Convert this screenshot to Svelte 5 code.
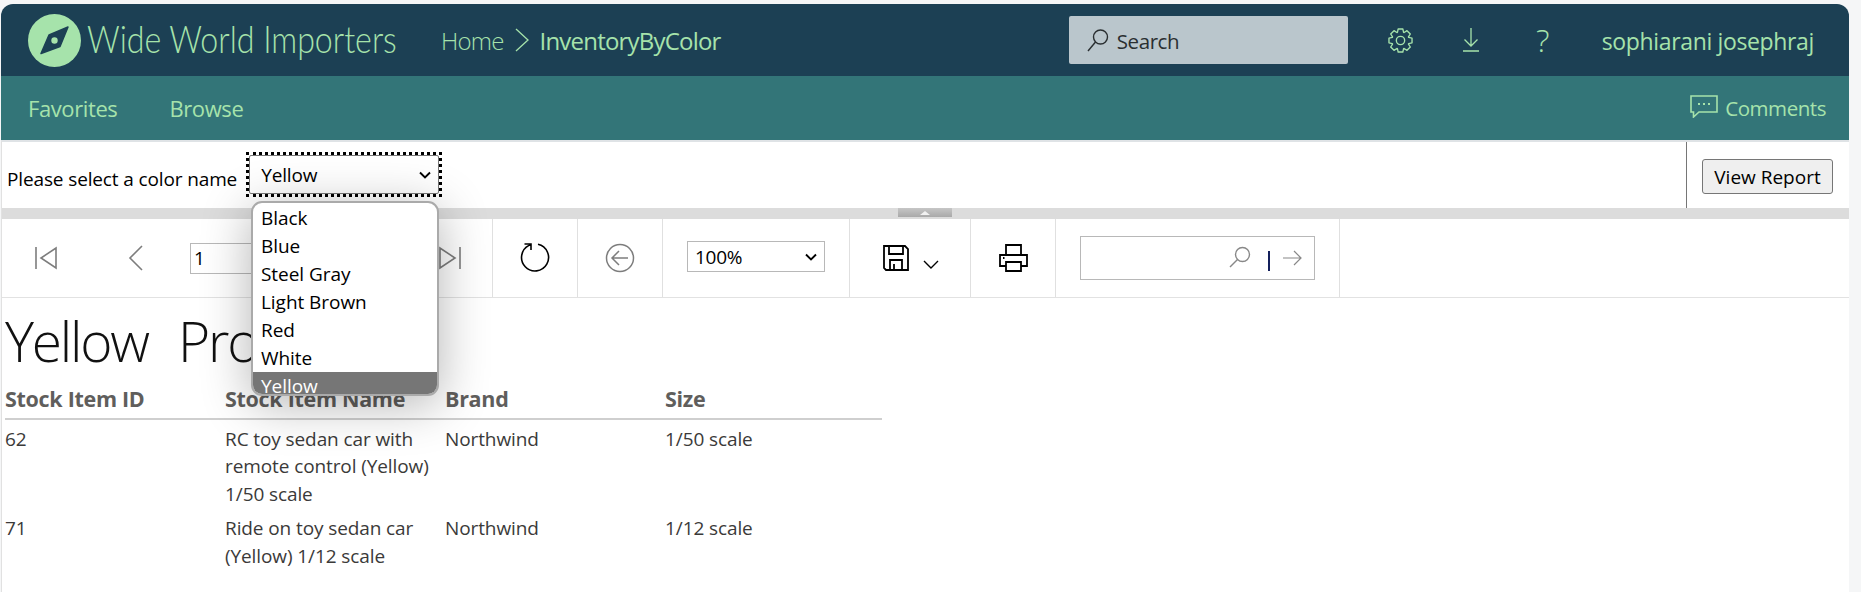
<script>
  const colors = ['Black', 'Blue', 'Steel Gray', 'Light Brown', 'Red', 'White', 'Yellow'];
  const rows = [
    { id: '62', name: 'RC toy sedan car with remote control (Yellow) 1/50 scale', brand: 'Northwind', size: '1/50 scale' },
    { id: '71', name: 'Ride on toy sedan car (Yellow) 1/12 scale', brand: 'Northwind', size: '1/12 scale' }
  ];
  // Eight-toothed gear outline, matching the cog in the header.
  function gearPath() {
    const pts = [];
    for (let i = 0; i < 8; i++) {
      const a = (i * Math.PI) / 4;
      const at = (r, d) => [12 + r * Math.sin(a + d), 12 - r * Math.cos(a + d)];
      pts.push(at(8.4, -0.36), at(11.3, -0.2), at(11.3, 0.2), at(8.4, 0.36));
    }
    return 'M' + pts.map((p) => p[0].toFixed(2) + ' ' + p[1].toFixed(2)).join(' L') + ' Z';
  }
  const gear = gearPath();
</script>

<div class="page">
  <div class="shell">
    <header class="top">
      <svg class="logo" viewBox="0 0 53 53">
        <circle cx="26.5" cy="26.5" r="26.5" fill="#a6e3ab" />
        <path d="M40 13 L32 32.5 L13 39.5 L21 21 Z" fill="#1c4054" stroke="#1c4054" stroke-width="1.5" stroke-linejoin="round" />
        <circle cx="26.5" cy="26.5" r="3.2" fill="#a6e3ab" />
      </svg>
      <span class="brand"><span>Wide World Importers</span></span>
      <span class="crumb light">Home</span>
      <svg class="crumb-sep" viewBox="0 0 16 24"><path d="M2 1 L14 12 L2 23" /></svg>
      <span class="crumb">InventoryByColor</span>
      <div class="search">
        <svg class="ic-search" viewBox="0 0 22 24"><circle cx="13.5" cy="9" r="7" /><path d="M8.5 14 L1 23" /></svg>
        <span>Search</span>
      </div>
      <svg class="ic gear" viewBox="0 0 24 24">
        <circle cx="12" cy="12" r="4" />
        <path d={gear} />
      </svg>
      <svg class="ic down" viewBox="0 0 16 24"><path d="M8 0 V18 M1.5 11.5 L8 18 L14.5 11.5 M0 23 H16" /></svg>
      <span class="help">?</span>
      <span class="user">sophiarani josephraj</span>
    </header>

    <nav class="sub">
      <span class="tab">Favorites</span>
      <span class="tab">Browse</span>
      <span class="comments">
        <svg viewBox="0 0 28 23">
          <path d="M1 1 H27 V17 H9 L3.5 22 V17 H1 Z" />
          <path class="dots" d="M8 9 h2 M13 9 h2 M18 9 h2" />
        </svg>
        Comments
      </span>
    </nav>

    <main class="body">
      <section class="params">
        <span class="label">Please select a color name</span>
        <div class="select-focus">
          <div class="select">Yellow
            <svg class="chev" viewBox="0 0 12 8"><path d="M1 1.5 L6 6.5 L11 1.5" /></svg>
          </div>
        </div>
        <div class="view-cell"><button class="view">View Report</button></div>
      </section>

      <div class="splitter"><span class="handle"><i></i></span></div>

      <section class="toolbar">
        <div class="cell nav">
          <svg class="tool first" viewBox="0 0 22 24"><path d="M1 1 V23 M21 2 V22 L6 12 Z" /></svg>
          <svg class="tool prev" viewBox="0 0 15 26"><path d="M14 1 L2 13 L14 25" /></svg>
          <input class="page-num" value="1" />
          <svg class="tool last" viewBox="0 0 22 24"><path d="M21 1 V23 M1 2 V22 L16 12 Z" /></svg>
        </div>
        <div class="cell refresh">
          <svg viewBox="0 0 30 30"><path d="M18 1.3 A13.5 13.5 0 1 1 9 2.4 L11 1 M4.5 1 H11 V7" /></svg>
        </div>
        <div class="cell back">
          <svg viewBox="0 0 30 30"><circle cx="15" cy="15" r="13.5" /><path d="M7 15 H23 M14 8 L7 15 L14 22" /></svg>
        </div>
        <div class="cell zoom">
          <div class="zoom-select">100%
            <svg class="chev" viewBox="0 0 12 8"><path d="M1 1.5 L6 6.5 L11 1.5" /></svg>
          </div>
        </div>
        <div class="cell save">
          <svg class="floppy" viewBox="0 0 26 26"><path d="M1 1 H22 L25 4 V25 H3 L1 23 Z M6 1 V9 H20 V1 M7 25 V15 H19 V25 M11 19 V25" /></svg>
          <svg class="save-chev" viewBox="0 0 16 9"><path d="M1 1 L8 8 L15 1" /></svg>
        </div>
        <div class="cell print">
          <svg viewBox="0 0 29 28"><path d="M7 11 V1 H22 V11 M7 22 H1 V11 H28 V22 H22 M7 18 H22 V27 H7 Z" /><path class="pdot" d="M4 14 h1.5" /></svg>
        </div>
        <div class="cell find">
          <div class="find-box">
            <svg class="find-ic" viewBox="0 0 22 22"><circle cx="13.5" cy="8.5" r="7" /><path d="M8.5 13.5 L1 21" /></svg>
            <span class="find-bar"></span>
            <svg class="find-next" viewBox="0 0 19 16"><path d="M0 8 H18 M11 1 L18 8 L11 15" /></svg>
          </div>
        </div>
      </section>

      <section class="report">
        <h1>Yellow&nbsp;&nbsp;Products</h1>
        <div class="grid head">
          <span>Stock Item ID</span><span>Stock Item Name</span><span>Brand</span><span>Size</span>
        </div>
        {#each rows as r}
          <div class="grid row">
            <span>{r.id}</span><span>{r.name}</span><span>{r.brand}</span><span>{r.size}</span>
          </div>
        {/each}
      </section>
    </main>

    <ul class="dropdown">
      {#each colors as c}
        <li class:sel={c === 'Yellow'}>{c}</li>
      {/each}
    </ul>
  </div>
</div>

<style>
  :global(body) { margin: 0; background: #f5f6f7; }
  .page { height: 592px; overflow: hidden; padding: 4px 12px 0 1px; box-sizing: border-box; font-family: "Open Sans", "Noto Sans", sans-serif; }
  .shell { position: relative; height: 588px; }

  .top { height: 72px; background: #1c4054; color: #a6e3ab; display: flex; align-items: center; border-radius: 12px 12px 0 0; padding-right: 35px; }
  .logo { width: 53px; height: 53px; margin-left: 27px; margin-top: 1px; flex: none; }
  .brand { font-family: Lato, sans-serif; font-size: 37.5px; font-weight: 300; margin-left: 6px; margin-top: -4px; width: 308px; white-space: nowrap; flex: none; }
  .brand span { display: inline-block; transform: scaleX(.857); transform-origin: left; }
  .crumb { font-size: 24px; letter-spacing: -.8px; white-space: nowrap; }
  .crumb.light { font-weight: 300; margin-left: 46px; }
  .crumb-sep { width: 16px; height: 24px; margin: 0 10px; fill: none; stroke: #a6e3ab; stroke-width: 1.3; flex: none; }
  .search { margin-left: auto; width: 279px; height: 48px; background: #bac6cc; border-radius: 2px; display: flex; align-items: center; color: #2a2f31; font-size: 20.5px; letter-spacing: -.4px; flex: none; }
  .search span { margin-top: 1px; }
  .ic-search { width: 22px; height: 24px; margin: 0 8px 0 18px; fill: none; stroke: #2a2f31; stroke-width: 1.4; }
  .ic { fill: none; stroke: #a6e3ab; stroke-width: 1.3; flex: none; }
  .gear { width: 25px; height: 25px; margin-left: 40px; stroke-linejoin: round; }
  .down { width: 16px; height: 24px; margin-left: 50px; }
  .help { font-size: 32px; font-weight: 300; margin-left: 56px; width: 16px; line-height: 1; text-align: center; }
  .user { font-size: 23px; margin-left: 51px; margin-top: 1px; letter-spacing: -.35px; white-space: nowrap; }

  .sub { height: 64px; background: #337578; color: #a6e3ab; display: flex; align-items: center; font-size: 22px; letter-spacing: -.4px; }
  .tab:first-child { margin-left: 27px; }
  .tab + .tab { margin-left: 52px; }
  .comments { margin-left: auto; margin-right: 23px; display: flex; align-items: center; gap: 7px; font-size: 20.5px; letter-spacing: -.45px; }
  .comments svg { width: 28px; height: 23px; fill: none; stroke: #a6e3ab; stroke-width: 1.6; margin-top: -3px; }
  .comments .dots { stroke-width: 2; }

  .body { background: #fff; border-top: 2px solid #dfe3e6; height: 452px; color: #222; border-left: 1px solid #e1e1e1; box-sizing: border-box; }

  .params { height: 66px; display: flex; align-items: center; color: #000; font-size: 19px; letter-spacing: -.13px; }
  .label { margin-left: 5px; margin-top: 7px; }
  .select-focus { margin-left: 10px; padding: 2px; outline: 3px dotted #000; outline-offset: -2px; flex: none; margin-top: -1px; }
  .select { width: 190px; height: 39px; border: 1px solid #767676; display: flex; align-items: center; justify-content: space-between; padding: 0 7px 0 11px; box-sizing: border-box; background: #fff; border-radius: 2px; }
  .chev { width: 12px; height: 8px; fill: none; stroke: #000; stroke-width: 1.9; }
  .view-cell { margin-left: auto; align-self: stretch; width: 163px; border-left: 1px solid #767676; display: flex; align-items: center; box-sizing: border-box; padding-left: 15px; }
  .view { width: 131px; height: 35px; padding: 0; border: 1px solid #767676; border-radius: 3px; background: #efefef; font: inherit; color: #000; letter-spacing: 0; margin-top: 3px; }

  .splitter { height: 11px; background: #dcdcdc; display: flex; justify-content: center; padding-right: 2px; }
  .handle { width: 54px; height: 9px; background: linear-gradient(#c6c6c6, #a9a9a9); display: flex; justify-content: center; align-items: center; }
  .handle i { width: 0; height: 0; border-left: 5px solid transparent; border-right: 5px solid transparent; border-bottom: 4px solid #f2f2f2; }

  .toolbar { height: 79px; display: flex; border-bottom: 1px solid #e2e2e2; box-sizing: border-box; }
  .cell { border-right: 1px solid #e0e0e0; display: flex; align-items: center; box-sizing: border-box; flex: none; }
  .cell svg { fill: none; }
  .tool { stroke: #7d7d7d; stroke-width: 1.6; }
  .nav { width: 491px; }
  .first { width: 22px; height: 24px; margin-left: 33px; }
  .prev { width: 15px; height: 26px; margin-left: 71px; }
  .page-num { width: 130px; height: 31px; margin-left: 47px; border: 1px solid #b8b8b8; padding: 0 0 0 3px; box-sizing: border-box; font: inherit; font-size: 19px; color: #000; flex: none; outline: none; }
  .last { width: 22px; height: 24px; margin-left: 119px; flex: none; }
  .refresh { width: 85px; justify-content: center; }
  .refresh svg { width: 30px; height: 30px; stroke: #000; stroke-width: 1.6; }
  .back { width: 85px; justify-content: center; }
  .back svg { width: 30px; height: 30px; stroke: #7d7d7d; stroke-width: 1.5; }
  .zoom { width: 187px; padding-left: 24px; }
  .zoom-select { width: 138px; height: 31px; margin-top: -3px; border: 1px solid #b8b8b8; box-sizing: border-box; display: flex; align-items: center; justify-content: space-between; padding: 0 7px; font-size: 19px; color: #000; letter-spacing: -.3px; }
  .save { width: 121px; padding-left: 33px; }
  .floppy { width: 26px; height: 26px; stroke: #000; stroke-width: 1.8; }
  .save-chev { width: 16px; height: 9px; stroke: #000; stroke-width: 1.4; margin: 12px 0 0 14px; }
  .print { width: 85px; justify-content: center; }
  .print svg { width: 29px; height: 28px; stroke: #000; stroke-width: 1.8; }
  .find { width: 284px; padding-left: 24px; }
  .find-box { width: 235px; height: 44px; border: 1px solid #b8b8b8; box-sizing: border-box; display: flex; align-items: center; justify-content: flex-end; padding-right: 12px; }
  .find-ic { width: 22px; height: 22px; stroke: #888; stroke-width: 1.4; margin-top: -2px; }
  .find-bar { width: 2px; height: 20px; background: #14205c; margin: 5px 13px 0 17px; }
  .find-next { width: 19px; height: 16px; stroke: #888; stroke-width: 1.2; margin-top: -1px; }

  .report { padding-left: 3px; }
  h1 { margin: 0; font-weight: 300; font-size: 55px; line-height: 86px; height: 87px; color: #111; letter-spacing: -2.2px; word-spacing: 3px; white-space: pre; box-sizing: border-box; }
  .grid { display: grid; grid-template-columns: repeat(4, 220px); width: 877px; }
  .head { font-weight: 700; font-size: 21.5px; color: #605e5c; letter-spacing: -.3px; line-height: 27px; padding-bottom: 6px; border-bottom: 2px solid #cfcfcf; }
  .row { font-size: 19px; line-height: 27.4px; color: #3b3a39; letter-spacing: -.1px; padding: 6px 0 1px; }

  .dropdown { position: absolute; z-index: 5; left: 250px; top: 197px; width: 188px; height: 195px; box-sizing: border-box; margin: 0; padding: 1px 0 0; list-style: none; background: #fff; border: 2px solid #aaa; border-radius: 11px; overflow: hidden; box-shadow: 0 8px 50px rgba(0,0,0,.3); color: #000; font-size: 19px; letter-spacing: -.05px; line-height: 28px; }
  .dropdown li { padding-left: 8px; height: 28px; }
  .dropdown li.sel { background: #767676; color: #fff; }
</style>
